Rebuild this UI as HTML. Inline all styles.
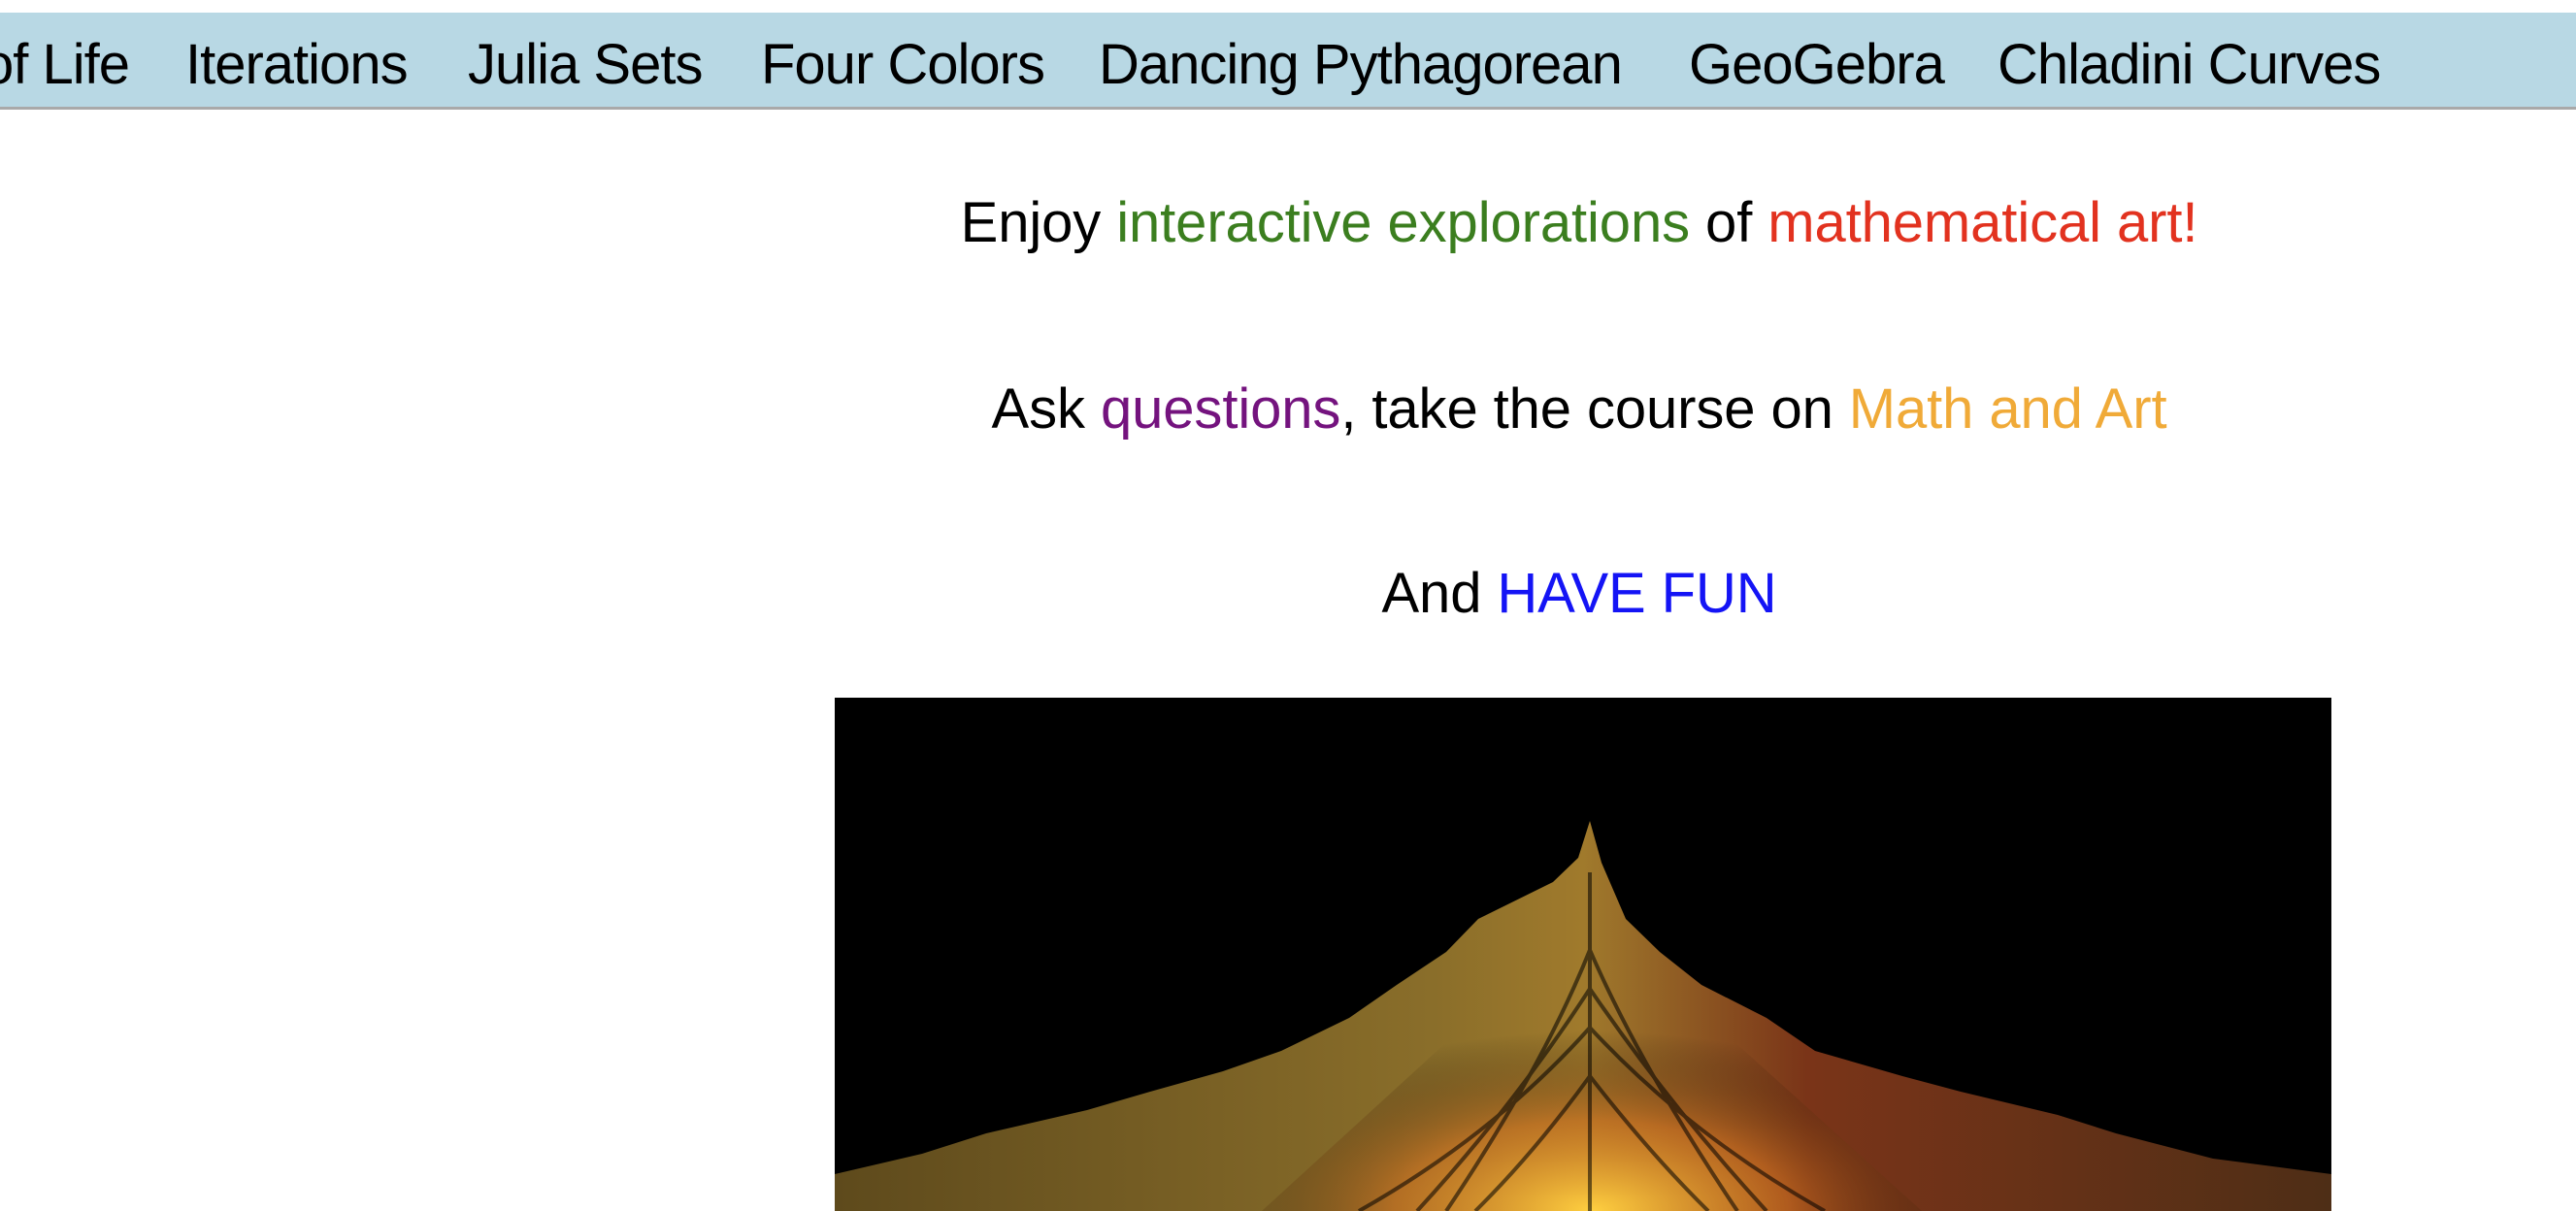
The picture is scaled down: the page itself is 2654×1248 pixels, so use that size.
<!DOCTYPE html>
<html><head><meta charset="utf-8"><style>
html,body{margin:0;padding:0;background:#fff;width:2654px;height:1248px;overflow:hidden;font-family:"Liberation Sans",sans-serif;}
.nav{position:absolute;left:0;top:13px;width:2654px;height:97px;background:#b8d8e4;border-bottom:3px solid #a9a9a9;}
.nav span{position:absolute;top:20px;font-size:58px;color:#000;letter-spacing:-1px;white-space:nowrap;}
.line{position:absolute;left:0;width:3254px;text-align:center;font-size:58px;white-space:nowrap;letter-spacing:-0.1px;}
.img{position:absolute;left:860px;top:719px;width:1542px;height:529px;background:#000;overflow:hidden;}
</style></head><body>
<div class="nav">
<span style="left:-18px">of Life</span>
<span style="left:191px">Iterations</span>
<span style="left:482px">Julia Sets</span>
<span style="left:784px">Four Colors</span>
<span style="left:1132px">Dancing Pythagorean</span>
<span style="left:1740px">GeoGebra</span>
<span style="left:2058px">Chladini Curves</span>
</div>
<div class="line" style="top:196px">Enjoy <span style="color:#3b7e1f">interactive explorations</span> of <span style="color:#e2321f">mathematical art!</span></div>
<div class="line" style="top:388px">Ask <span style="color:#74137e">questions</span>, take the course on <span style="color:#f0aa38">Math and Art</span></div>
<div class="line" style="top:578px">And <span style="color:#1414f5">HAVE FUN</span></div>
<div class="img">
<svg width="1542" height="529" viewBox="0 0 1542 529">
<defs>
<linearGradient id="g" x1="0" x2="1" y1="0" y2="0">
<stop offset="0" stop-color="#5e4a1c"/><stop offset="0.4" stop-color="#8a6e2a"/><stop offset="0.5" stop-color="#a07a2c"/><stop offset="0.65" stop-color="#7a3418"/><stop offset="1" stop-color="#4e2e16"/>
</linearGradient>
<radialGradient id="r" cx="0.5" cy="1" r="0.6">
<stop offset="0" stop-color="#ffd040"/><stop offset="0.5" stop-color="#d07020" stop-opacity="0.6"/><stop offset="1" stop-color="#000" stop-opacity="0"/>
</radialGradient>
</defs>
<polygon fill="url(#g)" points="778,127 790,170 815,228 850,262 893,296 960,330 1010,364 1100,390 1160,406 1260,430 1320,449 1420,475 1542,491 1542,529 0,529 0,491 90,470 156,449 260,425 325,406 400,385 460,364 530,330 579,296 630,262 663,228 740,190 766,165"/>
<polygon fill="url(#r)" points="778,220 1120,529 440,529"/>
<g stroke="#000" stroke-width="4" fill="none" opacity="0.55">
<path d="M778,180 L778,529"/><path d="M778,300 Q700,420 600,529"/><path d="M778,300 Q860,420 960,529"/>
<path d="M778,340 Q680,450 540,529"/><path d="M778,340 Q880,450 1020,529"/>
<path d="M778,390 Q720,470 660,529"/><path d="M778,390 Q840,470 900,529"/>
<path d="M778,260 Q730,380 630,529"/><path d="M778,260 Q830,380 930,529"/>
</g>
</svg>
</div>
</body></html>
